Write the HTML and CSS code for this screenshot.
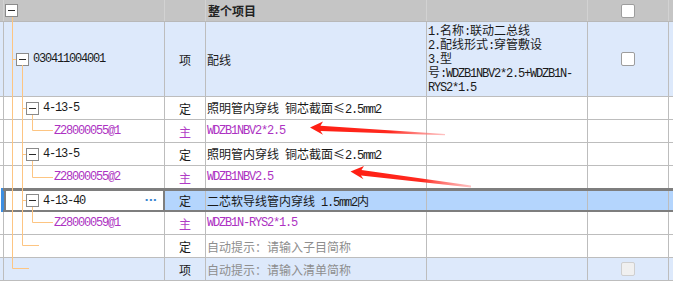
FILE: index.html
```html
<!DOCTYPE html>
<html lang="zh">
<head>
<meta charset="utf-8">
<title>整个项目</title>
<link rel="stylesheet" href="styles.css">
</head>
<body>
<div class="table">
  <div class="row head">
    <div class="c c0"></div>
    <div class="c d0"><span class="tg"></span></div>
    <div class="c ctr"></div>
    <div class="c txt"><b class="hd">整个项目</b></div>
    <div class="c"></div>
    <div class="c ctr"><span class="cb"></span></div>
    <div class="c"></div>
  </div>
  <div class="row r1 blue">
    <div class="c c0"></div>
    <div class="c d1"><span class="tg"></span><span class="m lbl">030411004001</span></div>
    <div class="c ctr">项</div>
    <div class="c txt"><span>配线</span></div>
    <div class="c desc"><div class="lines">
      <div class="ln"><span class="m">1.</span>名称<span class="m">:</span>联动二总线</div>
      <div class="ln"><span class="m">2.</span>配线形式<span class="m">:</span>穿管敷设</div>
      <div class="ln"><span class="m">3.</span>型</div>
      <div class="ln">号<span class="m">:WDZB1NBV2*2.5+WDZB1N-</span></div>
      <div class="ln"><span class="m">RYS2*1.5</span></div>
    </div></div>
    <div class="c ctr"><span class="cb"></span></div>
    <div class="c"></div>
  </div>
  <div class="row">
    <div class="c c0"></div>
    <div class="c d2"><span class="tg"></span><span class="m lbl">4-13-5</span></div>
    <div class="c ctr">定</div>
    <div class="c txt"><span>照明管内穿线<span class="m"> </span>铜芯截面≤<span class="m">2.5mm2</span></span></div>
    <div class="c"></div>
    <div class="c"></div>
    <div class="c"></div>
  </div>
  <div class="row pur">
    <div class="c c0"></div>
    <div class="c d3"><span class="m">Z28000055@1</span></div>
    <div class="c ctr">主</div>
    <div class="c txt"><span class="m">WDZB1NBV2*2.5</span></div>
    <div class="c"></div>
    <div class="c"></div>
    <div class="c"></div>
  </div>
  <div class="row">
    <div class="c c0"></div>
    <div class="c d2"><span class="tg"></span><span class="m lbl">4-13-5</span></div>
    <div class="c ctr">定</div>
    <div class="c txt"><span>照明管内穿线<span class="m"> </span>铜芯截面≤<span class="m">2.5mm2</span></span></div>
    <div class="c"></div>
    <div class="c"></div>
    <div class="c"></div>
  </div>
  <div class="row pur">
    <div class="c c0"></div>
    <div class="c d3"><span class="m">Z28000055@2</span></div>
    <div class="c ctr">主</div>
    <div class="c txt"><span class="m">WDZB1NBV2.5</span></div>
    <div class="c"></div>
    <div class="c"></div>
    <div class="c"></div>
  </div>
  <div class="row sel">
    <div class="c c0 selbar"></div>
    <div class="c d2 selcell"><span class="tg"></span><span class="m lbl">4-13-40</span><span class="dots">···</span></div>
    <div class="c ctr selnext">定</div>
    <div class="c txt"><span>二芯软导线管内穿线<span class="m"> 1.5mm2</span>内</span></div>
    <div class="c"></div>
    <div class="c"></div>
    <div class="c"></div>
  </div>
  <div class="row pur">
    <div class="c c0"></div>
    <div class="c d3"><span class="m">Z28000059@1</span></div>
    <div class="c ctr">主</div>
    <div class="c txt"><span class="m">WDZB1N-RYS2*1.5</span></div>
    <div class="c"></div>
    <div class="c"></div>
    <div class="c"></div>
  </div>
  <div class="row">
    <div class="c c0"></div>
    <div class="c"></div>
    <div class="c ctr">定</div>
    <div class="c txt hint"><span>自动提示：请输入子目简称</span></div>
    <div class="c"></div>
    <div class="c"></div>
    <div class="c"></div>
  </div>
  <div class="row blue">
    <div class="c c0"></div>
    <div class="c"></div>
    <div class="c ctr">项</div>
    <div class="c txt hint"><span>自动提示：请输入清单简称</span></div>
    <div class="c"></div>
    <div class="c ctr"><span class="cb off"></span></div>
    <div class="c"></div>
  </div>

  <svg class="overlay" width="673" height="283" viewBox="0 0 673 283" aria-hidden="true">
    <defs>
      <linearGradient id="g1" gradientUnits="userSpaceOnUse" x1="310" y1="127" x2="445" y2="135">
        <stop offset="0" stop-color="#ff1e12"/>
        <stop offset="0.6" stop-color="#ff2a20"/>
        <stop offset="1" stop-color="#ff9a9a" stop-opacity="0.6"/>
      </linearGradient>
      <linearGradient id="g2" gradientUnits="userSpaceOnUse" x1="350" y1="171" x2="471" y2="187">
        <stop offset="0" stop-color="#ff1e12"/>
        <stop offset="0.6" stop-color="#ff2a20"/>
        <stop offset="1" stop-color="#ff9a9a" stop-opacity="0.6"/>
      </linearGradient>
    </defs>
    <g class="tree" fill="none" stroke="#fdc582" stroke-width="1">
      <path d="M12.5 17 V268.5 H29"/>
      <path d="M12.5 59.5 H16"/>
      <path d="M22.5 65 V245.5 H39"/>
      <path d="M22.5 108.5 H26"/>
      <path d="M22.5 154.5 H26"/>
      <path d="M22.5 200.5 H26"/>
      <path d="M32.5 115 V130.5 H53"/>
      <path d="M32.5 161 V177.5 H53"/>
      <path d="M32.5 207 V222.5 H53"/>
    </g>
    <polygon fill="url(#g1)" points="310,127.5 323,121.5 320.5,125.8 445,134 445,135.3 320.5,131 323,134.8"/>
    <polygon fill="url(#g2)" points="350.5,171.5 364,166 361.5,170 471,185.6 471,187.4 361,175.5 363.5,179.2"/>
  </svg>
</div>
</body>
</html>
```
FILE: styles.css
```css
html, body {
  margin: 0;
  padding: 0;
}
body {
  width: 673px;
  height: 283px;
  overflow: hidden;
  background: #ffffff;
  font-family: "Noto Sans CJK SC", "Noto Sans", sans-serif;
  font-size: 12px;
  color: #1a1a1a;
}
.table {
  position: relative;
  width: 673px;
}
.row {
  display: grid;
  grid-template-columns: 3px 161px 41px 221px 161px 81px 1fr;
  height: 23px;
  box-sizing: border-box;
  border-bottom: 1px solid #bdbdbd;
}
.c {
  border-left: 1px solid #bdbdbd;
  display: flex;
  align-items: center;
  min-width: 0;
  overflow: hidden;
  white-space: nowrap;
  box-sizing: border-box;
}
.c0 {
  border-left: none;
}
.head {
  height: 22px;
  background: #c5c5c5;
  border-bottom-color: #b8b8b8;
}
.head .c {
  border-left-color: #d2d2d2;
}
.hd {
  font-weight: 700;
  color: #222;
  padding-left: 1px;
}
.r1 {
  height: 75px;
}
.blue {
  background: #dde9fb;
}
.ctr {
  justify-content: center;
}
.txt {
  padding-left: 1px;
}
.txt > span {
  white-space: pre;
}
.desc {
  align-items: flex-start;
  padding: 1px 0 0 1px;
}
.lines {
  display: flex;
  flex-direction: column;
}
.ln {
  height: 14px;
  line-height: 14px;
  white-space: pre;
}
.ln .m {
  line-height: 14px;
}
.d0 { padding-left: 1px; }
.d1 { padding-left: 12px; }
.d2 { padding-left: 22px; }
.d3 { padding-left: 50px; }
.tg {
  flex: none;
  width: 13px;
  height: 13px;
  box-sizing: border-box;
  border: 1px solid #8a8a8a;
  background: #ffffff;
  position: relative;
}
.tg::after {
  content: "";
  position: absolute;
  left: 2px;
  right: 2px;
  top: 5px;
  height: 1px;
  background: #2a2a2a;
}
.lbl {
  margin-left: 4px;
}
.m {
  font-family: "Liberation Mono", monospace;
  font-size: 12px;
  letter-spacing: -1.2px;
}
.pur {
  color: #ad32c2;
}
.pur .ctr {
  color: #b03cc6;
}
.hint {
  color: #8e8e8e;
}
.cb {
  width: 14px;
  height: 14px;
  box-sizing: border-box;
  border: 1px solid #9d9d9d;
  border-radius: 2px;
  background: #ffffff;
}
.cb.off {
  background: #f0f0f0;
  border-color: #cfcfcf;
}
.sel {
  height: 24px;
  margin-top: -1px;
  border-top: 3px solid #7e7e7e;
  border-bottom: 2px solid #7e7e7e;
  background: #b4d5fd;
}
.selbar {
  margin: -3px 0 -2px;
  background: linear-gradient(to right, #ffffff 1px, #3c8ee2 1px);
}
.selcell {
  background: #ffffff;
  border-left: 1px solid #3c8ee2;
  box-shadow: inset 2px 0 0 #7e7e7e, inset -1px 0 0 #7e7e7e;
}
.selnext {
  border-left-color: #7e7e7e;
}
.dots {
  margin-left: auto;
  margin-right: 7px;
  color: #3a86d0;
  font-weight: 700;
  font-family: "DejaVu Sans", sans-serif;
  font-size: 11px;
}
.overlay {
  position: absolute;
  left: 0;
  top: 0;
  pointer-events: none;
}
```
